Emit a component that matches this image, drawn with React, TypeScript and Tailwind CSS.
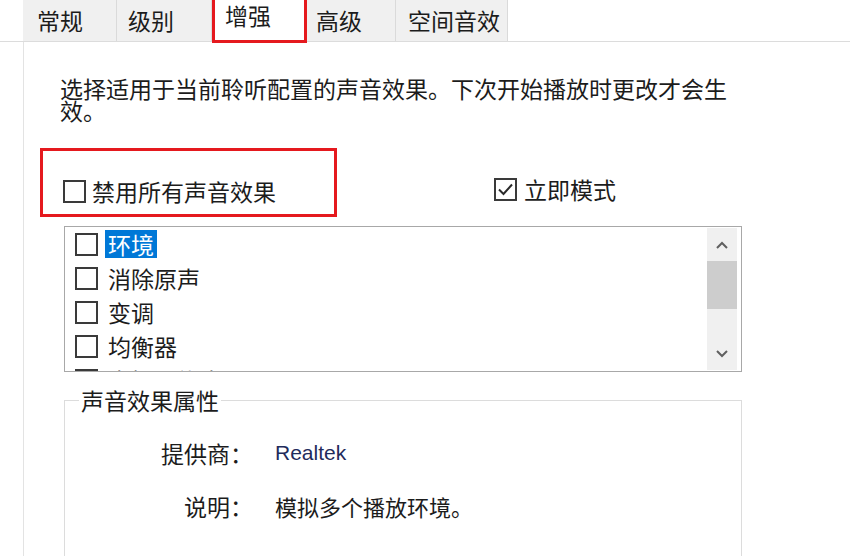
import React from 'react';

const tabs = [
  { label: '常规', w: 'w-[94px]', pl: 'pl-[14px]' },
  { label: '级别', w: 'w-[95px]', pl: 'pl-[11px]' },
  { label: '增强', w: 'w-[95px]', pl: 'pl-[10px]', active: true },
  { label: '高级', w: 'w-[89px]', pl: 'pl-[9px]' },
  { label: '空间音效', w: 'w-[112px]', pl: 'pl-[12px]' },
];

const effects = ['环境', '消除原声', '变调', '均衡器', '虚拟环绕声'];

function CheckBox({ checked = false }: { checked?: boolean }) {
  return (
    <div className="w-[23px] h-[23px] shrink-0 border-2 border-[#3a3a3a] bg-white flex items-center justify-center">
      {checked && (
        <svg width="17" height="17" viewBox="0 0 17 17">
          <path d="M2 8.5 L6.5 13 L15 3.5" fill="none" stroke="#2a2a2a" strokeWidth="2" />
        </svg>
      )}
    </div>
  );
}

export default function App() {
  return (
    <div className="w-[850px] h-[556px] overflow-hidden bg-white text-[#1c1c1c] font-['Noto_Sans_CJK_SC','Noto_Sans',sans-serif]">
      {/* 标签栏 */}
      <div className="flex h-[42px] border-b border-[#dcdcdc] pl-[23px]">
        {tabs.map(tab =>
          tab.active ? (
            <div
              key={tab.label}
              className={`${tab.w} ${tab.pl} h-[43px] bg-white border-[3px] border-t-0 border-[#e5191e] text-[23px] leading-[26px] pt-[2px]`}
            >
              {tab.label}
            </div>
          ) : (
            <div
              key={tab.label}
              className={`${tab.w} ${tab.pl} h-full bg-[#f0f0f0] border-r border-[#dadada] text-[23px] leading-[22px] pt-[9px]`}
            >
              {tab.label}
            </div>
          )
        )}
      </div>

      {/* 内容面板 */}
      <div className="ml-[23px] h-[514px] border-l border-[#e3e3e3] pl-[38px] pt-[35px]">
        <p className="-ml-[2px] w-[680px] text-[23px] leading-[22px]">
          选择适用于当前聆听配置的声音效果。下次开始播放时更改才会生效。
        </p>

        <div className="flex items-start mt-[27px]">
          <div className="-ml-[22px] w-[297px] h-[69px] border-[3px] border-[#e5191e] pl-[20px] pt-[29px] flex items-start gap-[6px]">
            <CheckBox />
            <span className="text-[23px] leading-[23px]">禁用所有声音效果</span>
          </div>
          <div className="ml-[157px] mt-[30px] flex items-start gap-[7px]">
            <CheckBox checked />
            <span className="text-[23px] leading-[23px]">立即模式</span>
          </div>
        </div>

        {/* 效果列表 */}
        <div className="ml-[2px] mt-[9px] w-[678px] h-[146px] border border-[#a8a8a8] flex overflow-hidden">
          <div className="flex-1 pl-[10px]">
            {effects.map((name, i) => (
              <div key={name} className="h-[34px] flex items-center gap-[7px]">
                <CheckBox />
                <span
                  className={`text-[23px] leading-[28px] px-[3px] ${
                    i === 0 ? 'bg-[#0078d7] text-white' : ''
                  }`}
                >
                  {name}
                </span>
              </div>
            ))}
          </div>
          <div className="w-[30px] mr-[4px] my-[1px] bg-[#f0f0f0] flex flex-col items-center">
            <div className="h-[33px] flex items-center justify-center">
              <svg width="12" height="8" viewBox="0 0 12 8">
                <path d="M1 7 L6 2 L11 7" fill="none" stroke="#606060" strokeWidth="2" />
              </svg>
            </div>
            <div className="w-full h-[48px] bg-[#cdcdcd]" />
            <div className="flex-1" />
            <div className="h-[33px] flex items-center justify-center">
              <svg width="12" height="8" viewBox="0 0 12 8">
                <path d="M1 1 L6 6 L11 1" fill="none" stroke="#606060" strokeWidth="2" />
              </svg>
            </div>
          </div>
        </div>

        {/* 属性分组 */}
        <fieldset className="ml-[2px] mt-[15px] w-[678px] h-[200px] border border-[#dcdcdc] px-[14px]">
          <legend className="px-[2px] text-[23px] leading-[26px]">声音效果属性</legend>
          <div className="grid grid-cols-[174px_1fr] gap-x-[22px] gap-y-[27px] mt-[27px]">
            <div className="text-right text-[23px] leading-[26px]">提供商：</div>
            <div className="text-[21px] leading-[26px] text-[#1f2b5c] font-['Liberation_Sans',sans-serif]">
              Realtek
            </div>
            <div className="text-right text-[23px] leading-[26px]">说明：</div>
            <div className="text-[22px] leading-[26px]">模拟多个播放环境。</div>
          </div>
        </fieldset>
      </div>
    </div>
  );
}
